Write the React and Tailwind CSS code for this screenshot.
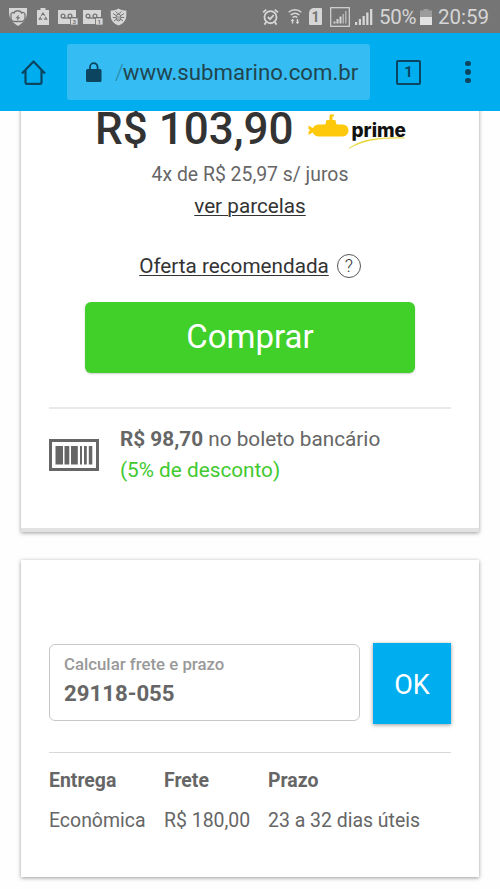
import React from 'react';

const StatusBar = () => (
  <div className="flex h-[33px] shrink-0 items-center justify-between bg-[#757575] pl-2 pr-[11px] text-[#d6d6d6]">
    <div className="flex items-center">
      <svg className="h-5 w-5" viewBox="0 0 20 20" fill="currentColor">
        <path d="M1 1h18v4.500c0 6-4 10.500-9 13.500C5 16 1 11.500 1 5.500z" />
        <path d="M3 8.500c-.5-3 2-3.500 3-2.500 1-3 6.500-3 7.500 0 1.500-1 4-.5 3.500 2.500v2c0 2.500-2 4-4 4H7c-2.500 0-4-1.500-4-4z" fill="none" stroke="#757575" strokeWidth="1.300" />
        <path d="M10.800 7.500 7.500 11.200h2L9 14l3.300-3.800h-2z" fill="#757575" />
      </svg>
      <svg className="ml-[9px] h-[17px] w-3" viewBox="0 0 12 17" fill="currentColor">
        <path d="M3.500 0h5v2H12v15H0V2h3.500z" />
        <path d="M4.200 7.800 6 5l1.800 2.800M3.700 8.700 2.300 11.200h2.800M8.300 8.700l1.400 2.500H6.900" fill="none" stroke="#757575" strokeWidth="1.200" />
      </svg>
      {['3', '1'].map((n, i) => (
        <svg key={n} className={i === 0 ? 'ml-[9px] h-4 w-5' : 'ml-[5px] h-4 w-5'} viewBox="0 0 20 16" fill="currentColor">
          <path d="M0 1h18v7h-6v7H0z" />
          <g fill="none" stroke="#757575" strokeWidth="1.300">
            <circle cx="5" cy="7" r="1.900" />
            <circle cx="12" cy="7" r="1.900" />
            <path d="M5 9h7" />
          </g>
          <rect x="12.500" y="9" width="7.500" height="7" stroke="#757575" strokeWidth=".7" />
          <text x="16.200" y="14.800" fontSize="6" fontWeight="700" fontFamily="Roboto, sans-serif" textAnchor="middle" fill="#757575">{n}</text>
        </svg>
      ))}
      <svg className="ml-[7px] h-[18px] w-[17px]" viewBox="0 0 17 18" fill="currentColor">
        <path d="M8.500.5C10.500 2 13.500 2.500 16.300 2.500v5c0 5-3.300 8.500-7.800 10C4 16 .7 12.500.7 7.500v-5C3.500 2.500 6.500 2 8.500.5z" />
        <path d="M5.500 3.500 8.500 6l3-2.500M3 5.500l3 2M14 5.500l-3 2M2.800 9.500H6M14.200 9.500H11M4 13l2.500-2M13 13l-2.500-2" fill="none" stroke="#757575" strokeWidth="1" />
        <ellipse cx="8.500" cy="9.500" rx="2.300" ry="3.500" fill="none" stroke="#757575" />
        <path d="M7 9h3M7 11h3" stroke="#757575" strokeWidth=".8" />
      </svg>
    </div>
    <div className="flex items-center">
      <svg className="h-[18px] w-[17px]" viewBox="0 0 16 17" fill="none" stroke="currentColor" strokeWidth="1.700">
        <circle cx="8" cy="8.700" r="5.700" />
        <path d="m5.500 8.500 2 2 3.500-3.700M1 4.200 4 1.500M15 4.200 12 1.500M4 13.300l-1.700 2.400M12 13.300l1.700 2.400" />
      </svg>
      <svg className="ml-[9px] h-[17px] w-[14px]" viewBox="0 0 14 17" fill="none" stroke="currentColor" strokeWidth="1.500">
        <path d="M.7 4.300c3.600-3.300 9-3.300 12.600 0M2.700 7c2.500-2.200 6.100-2.200 8.600 0M4.700 9.500c1.300-1.200 3.300-1.200 4.600 0" />
        <path d="M4.500 15.500v-4.500M9.500 11v4.500" />
        <path d="M2.500 13 4.500 11l2 2zM7.500 13.800l2 2.200 2-2.200z" fill="currentColor" stroke="none" />
      </svg>
      <span className="ml-[7px] flex h-[17px] w-[13px] items-center justify-center rounded-[1px] rounded-tl-[5px] bg-[#d6d6d6] text-[14px] font-bold leading-none text-[#757575]">1</span>
      <svg className="ml-[8px] h-5 w-5" viewBox="0 0 20 20" fill="currentColor">
        <rect x=".7" y=".7" width="18.600" height="18.600" fill="none" stroke="currentColor" strokeWidth="1.200" />
        <path d="M3.500 14.500h2v2h-2zM6.500 12h2v4.500h-2zM9.500 9.500h2v7h-2z" />
        <path d="M12.500 7h1.500v9.500h-1.500zM15 4h1.500v12.500H15z" opacity=".65" />
      </svg>
      <svg className="ml-[5px] h-[17px] w-[18px]" viewBox="0 0 18 17" fill="currentColor">
        <path d="M0 14h2.200v3H0zM3.800 11H6v6H3.800zM7.500 8h2.300v9H7.500zM11.200 4.500h2.300V17h-2.300zM15 1h2.300v16H15z" />
      </svg>
      <span className="ml-[6px] w-[39px] pt-[2px] text-[20.500px] leading-none tracking-[-0.300px]">50%</span>
      <svg className="ml-[2px] h-4 w-3" viewBox="0 0 12 16">
        <path d="M3.500 0h5v1.500H12V8H0V1.500h3.500z" fill="#9c9c9c" />
        <path d="M0 8h12v8H0z" fill="#e2e2e2" />
      </svg>
      <span className="ml-[6px] pt-[2px] text-[20.500px] leading-none">20:59</span>
    </div>
  </div>
);

const BrowserBar = () => (
  <div className="flex h-[78px] shrink-0 items-center bg-[#00aeef] pl-[21px] text-[#0b4560]">
    <svg className="h-[25px] w-[25px]" viewBox="0 0 25 25" fill="none" stroke="currentColor" strokeWidth="2.200" strokeLinejoin="round">
      <path d="M1 13.500 12.500 1.500 24 13.500M4.500 10v12.500a1.300 1.300 0 0 0 1.300 1.300h13.400a1.300 1.300 0 0 0 1.300-1.300V10" />
    </svg>
    <div className="ml-[21px] flex h-[56px] w-[303px] items-center rounded-[3px] bg-[#35bdf3] pl-[19px]">
      <svg className="h-5 w-4" viewBox="0 0 16 20" fill="currentColor">
        <rect x="0" y="7" width="15.500" height="13" rx="1.500" />
        <path d="M4 8V5a3.800 3.800 0 0 1 7.600 0v3" fill="none" stroke="currentColor" strokeWidth="1.800" />
      </svg>
      <span className="ml-[13px] whitespace-nowrap text-[22.200px] leading-none text-[#21454f]">
        <span className="-mr-px font-light text-[#2b88a8]">/</span>www.submarino.com.br
      </span>
    </div>
    <div className="ml-[26px] flex h-[25px] w-[25px] items-center justify-center rounded-[2px] border-2 border-[#0b4560] text-[15px] font-bold leading-none">1</div>
    <div className="ml-[44px] flex flex-col gap-[3px]">
      <span className="h-[5.500px] w-[5.500px] rounded-full bg-[#0b4560]" />
      <span className="h-[5.500px] w-[5.500px] rounded-full bg-[#0b4560]" />
      <span className="h-[5.500px] w-[5.500px] rounded-full bg-[#0b4560]" />
    </div>
  </div>
);

const PrimeLogo = () => (
  <svg className="h-[38px] w-[100px]" viewBox="0 0 100 38">
    <g fill="#fdc90a">
      <rect x="4.500" y="10.500" width="36" height="12" rx="5.800" />
      <path d="M16 11.500c1.500-.8 2-2 2-4 0-1 .5-1.500 1.500-1.500h2V1.800c0-.8.500-1.300 1.300-1.300H26v2h-1.500V6h1.800c1 0 1.500.5 1.500 1.500 0 2 .7 3.200 2.200 4zM.5 11.500l5 3v3.500l-5 3v-3.200l1.500-1.500-1.500-1.600z" />
    </g>
    <text x="43.500" y="22.500" fontSize="19" fontWeight="800" fontFamily="Inter, sans-serif" textLength="54.500" lengthAdjust="spacingAndGlyphs" fill="#111">prime</text>
    <path d="M41 34.500C52 26 68 22.800 96.500 24 70 23.800 55 26.500 41 34.500z" fill="#e8d326" stroke="#e8d326" strokeWidth=".5" />
  </svg>
);

const BarcodeIcon = () => (
  <svg className="h-8 w-[50px]" viewBox="0 0 50 32" fill="#666">
    <rect x="1.500" y="1.500" width="47" height="29" fill="none" stroke="#666" strokeWidth="3" />
    <path d="M6.500 7h7.500v18.500H6.500zM15.500 7h4.800v18.500h-4.800zM22 7h6.800v18.500H22zM31 7h2v18.500h-2zM35 7h2.800v18.500H35zM39.800 7h3.500v18.500h-3.500z" />
  </svg>
);

const OfferCard = () => (
  <section className="mx-[21px] border-b-4 border-[#e2e2e2] bg-white px-7 pb-[42px] shadow-[0_1px_4px_rgba(0,0,0,0.4)]">
    <div className="-mt-[6px] flex items-start pl-[46px]">
      <h1 className="w-[213px] whitespace-nowrap text-[44px] font-medium leading-[48px] text-[#333]">R$ 103,90</h1>
      <div className="mt-[9px]">
        <PrimeLogo />
      </div>
    </div>
    <div className="mt-[6px] text-center">
      <p className="text-[19.400px] leading-8 text-[#666]">4x de R$ 25,97 s/ juros</p>
      <p className="text-[20.700px] leading-[31px] text-[#333]">
        <a className="underline decoration-1 underline-offset-2">ver parcelas</a>
      </p>
    </div>
    <div className="mt-7 flex items-center justify-center gap-2 text-[20.700px] leading-8 text-[#333]">
      <a className="underline decoration-1 underline-offset-2">Oferta recomendada</a>
      <span className="flex h-6 w-6 items-center justify-center rounded-full border border-[#555] text-lg font-light leading-none">?</span>
    </div>
    <button className="mx-auto mt-5 block h-[71px] w-[330px] rounded-[6px] bg-[#41cf29] pb-[2px] text-[33px] text-white shadow-[0_1px_2px_rgba(0,0,0,0.2)]">
      Comprar
    </button>
    <div className="mt-[34px] flex items-center border-t-2 border-[#e9e9e9] pt-[15px]">
      <BarcodeIcon />
      <div className="ml-[21px] text-[20.750px] leading-[31px] text-[#666]">
        <p><b className="font-bold">R$ 98,70</b> no boleto bancário</p>
        <p className="text-[#41c92f]">(5% de desconto)</p>
      </div>
    </div>
  </section>
);

const ShippingCard = () => (
  <section className="mx-[21px] mt-7 bg-white px-7 pb-[36px] pt-[83px] text-[#666] shadow-[0_1px_4px_rgba(0,0,0,0.4)]">
    <div className="flex items-start justify-between">
      <label className="mt-px block h-[77px] w-[311px] rounded-[6px] border border-[#c8c8c8] pl-[14px] pt-[7px]">
        <span className="block text-[16.800px] font-medium leading-6 text-[#999]">Calcular frete e prazo</span>
        <span className="block text-[22.200px] font-bold leading-[34px]">29118-055</span>
      </label>
      <button className="h-[81px] w-[78px] bg-[#00aeef] text-[27px] text-white shadow-[0_1px_4px_rgba(0,0,0,0.4)]">
        <span className="relative top-[2px]">OK</span>
      </button>
    </div>
    <table className="mt-[28px] w-full table-fixed border-t border-[#d8d8d8] text-left text-[19.450px] leading-10">
      <thead>
        <tr>
          <th className="w-[115px] p-0 pt-[8px] font-bold">Entrega</th>
          <th className="w-[104px] p-0 pt-[8px] font-bold">Frete</th>
          <th className="p-0 pt-[8px] font-bold">Prazo</th>
        </tr>
      </thead>
      <tbody>
        <tr className="whitespace-nowrap">
          <td className="p-0">Econômica</td>
          <td className="p-0">R$ 180,00</td>
          <td className="p-0">23 a 32 dias úteis</td>
        </tr>
      </tbody>
    </table>
  </section>
);

const App = () => {
  return (
    <div className="flex h-[889px] w-[500px] flex-col overflow-hidden bg-[#fefefe] font-['Roboto',sans-serif]">
      <StatusBar />
      <BrowserBar />
      <main className="flex-1 overflow-hidden">
        <OfferCard />
        <ShippingCard />
      </main>
    </div>
  );
};

export default App;
